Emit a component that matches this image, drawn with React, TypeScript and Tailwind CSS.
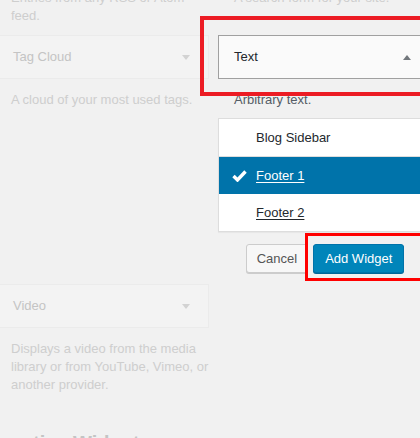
import React from "react";

const font = { fontFamily: '"Liberation Sans", Arial, sans-serif' };

const Arrow = ({ up, color }: { up?: boolean; color: string }) => (
  <svg width="8" height="5" viewBox="0 0 8 5" className="block">
    <path d={up ? "M0 5 L4 0 L8 5 Z" : "M0 0 L8 0 L4 5 Z"} fill={color} />
  </svg>
);

const FadedWidget = ({ title, children }: { title: string; children: React.ReactNode }) => (
  <div>
    <div className="h-[44px] flex items-center justify-between pl-[16px] pr-[18px] bg-[#f3f3f3] border border-[#ebebeb]">
      <span className="text-[13px] text-[#c4c4c4]">{title}</span>
      <Arrow color="#d2d2d2" />
    </div>
    <p className="mt-[12px] px-[15px] whitespace-nowrap text-[13px] leading-[18px] text-[#cecece]">{children}</p>
  </div>
);

export default function App() {
  return (
    <div style={font} className="relative w-[420px] h-[438px] overflow-hidden bg-[#f1f1f1]">
      <div className="-mt-[11px] -ml-[4px] w-[460px] grid grid-cols-[213px_214px] gap-x-[9px] gap-y-[10px] items-start">
        {/* row 1: tails of widgets above */}
        <p className="px-[15px] text-[13px] leading-[18px] text-[#cecece]">
          Entries from any RSS or Atom
          <br />
          feed.
        </p>
        <p className="px-[16px] text-[13px] leading-[18px] text-[#cecece]">A search form for your site.</p>

        {/* row 2 */}
        <FadedWidget title="Tag Cloud">A cloud of your most used tags.</FadedWidget>

        <div className="mb-[1px]">
          <div className="h-[44px] flex items-center justify-between pl-[15px] pr-[20px] bg-[#fafafa] border border-[#a0a0a0]">
            <span className="text-[13px] text-[#23282d]">Text</span>
            <Arrow up color="#72777c" />
          </div>
          <p className="mt-[12px] px-[16px] text-[13px] leading-[18px] text-[#555d66]">Arbitrary text.</p>
          <ul className="mt-[9px] bg-white border border-[#dddddd] shadow-[0_1px_1px_rgba(0,0,0,0.04)]">
            <li className="h-[38px] flex items-center pl-[37px] border-b border-[#dddddd] text-[13px] text-[#23282d]">
              Blog Sidebar
            </li>
            <li className="h-[37px] flex items-center pl-[13px] gap-[9px] bg-[#0073aa] text-[13px] text-white">
              <svg width="15" height="12" viewBox="0 0 15 12" className="block">
                <path d="M1.5 6 L5.5 10 L13.5 1.5" stroke="white" strokeWidth="3.4" fill="none" strokeLinejoin="miter" />
              </svg>
              <span className="underline underline-offset-[2px]">Footer 1</span>
            </li>
            <li className="h-[37px] flex items-center pl-[37px] text-[13px] text-[#23282d]">
              <span className="underline underline-offset-[2px]">Footer 2</span>
            </li>
          </ul>
          <div className="mt-[12px] flex justify-center gap-[5px]">
            <button className="h-[29px] px-[10px] rounded-[3px] bg-[#f7f7f7] border border-[#cccccc] shadow-[0_1px_0_#cccccc] text-[13px] text-[#555555]">
              Cancel
            </button>
            <button className="h-[29px] px-[11px] rounded-[3px] bg-[#0085ba] border border-[#0073aa] shadow-[0_1px_0_#006799] text-[13px] text-white">
              Add Widget
            </button>
          </div>
        </div>

        {/* row 3 */}
        <FadedWidget title="Video">
          Displays a video from the media
          <br />
          library or from YouTube, Vimeo, or
          <br />
          another provider.
        </FadedWidget>
        <div />
      </div>

      <h2 className="mt-[36px] -ml-[7px] text-[20px] leading-[26px] font-semibold text-[#c4c4c4]">Inactive Widgets</h2>

      {/* annotation boxes */}
      <div className="absolute left-[200px] top-[16px] w-[240px] h-[80px] border-4 border-[#ec1c24]" />
      <div className="absolute left-[305px] top-[233px] w-[140px] h-[48px] border-[3.5px] border-[#ff0000]" />
    </div>
  );
}
